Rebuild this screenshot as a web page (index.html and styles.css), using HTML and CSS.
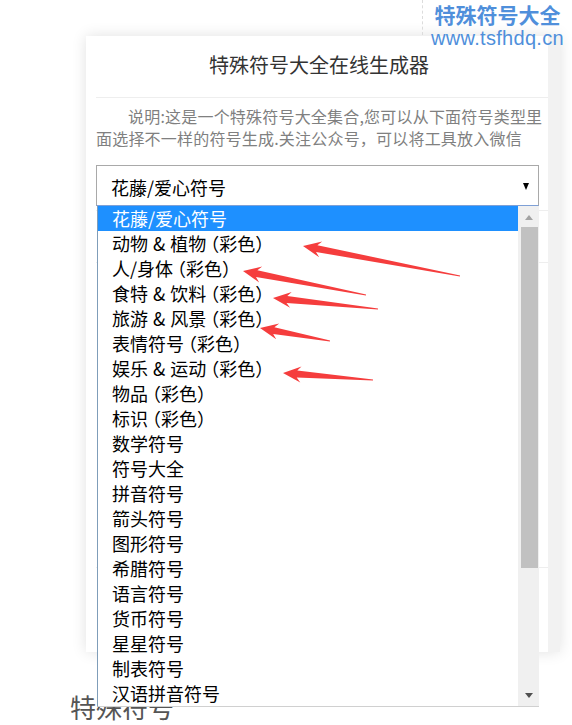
FILE: index.html
```html
<!doctype html>
<html lang="zh-CN">
<head>
    <meta charset="utf-8">
    <title>特殊符号大全在线生成器</title>
    <link rel="stylesheet" href="styles.css">
</head>
<body class="page">

<header class="topbar">
    <div class="brand">
        <div class="brand-name">特殊符号大全</div>
        <div class="brand-url">www.tsfhdq.cn</div>
    </div>
</header>

<section class="card">
    <div class="card-main">
        <h1 class="card-title">特殊符号大全在线生成器</h1>
        <div class="card-rule"></div>
        <p class="card-desc">说明:这是一个特殊符号大全集合,您可以从下面符号类型里面选择不一样的符号生成.关注公众号，可以将工具放入微信</p>

        <div class="picker">
            <div class="picker-box">
                <span class="picker-value">花藤/爱心符号</span>
                <span class="picker-caret"></span>
            </div>

            <!-- opened dropdown -->
            <div class="picker-list">
                <ul class="picker-options">
                    <li class="picker-option is-selected">花藤/爱心符号</li>
                    <li class="picker-option">动物 &amp; 植物<span class="paren">（彩色）</span></li>
                    <li class="picker-option">人/身体<span class="paren">（彩色）</span></li>
                    <li class="picker-option">食特 &amp; 饮料<span class="paren">（彩色）</span></li>
                    <li class="picker-option">旅游 &amp; 风景<span class="paren">（彩色）</span></li>
                    <li class="picker-option">表情符号<span class="paren">（彩色）</span></li>
                    <li class="picker-option">娱乐 &amp; 运动<span class="paren">（彩色）</span></li>
                    <li class="picker-option">物品<span class="paren">（彩色）</span></li>
                    <li class="picker-option">标识<span class="paren">（彩色）</span></li>
                    <li class="picker-option">数学符号</li>
                    <li class="picker-option">符号大全</li>
                    <li class="picker-option">拼音符号</li>
                    <li class="picker-option">箭头符号</li>
                    <li class="picker-option">图形符号</li>
                    <li class="picker-option">希腊符号</li>
                    <li class="picker-option">语言符号</li>
                    <li class="picker-option">货币符号</li>
                    <li class="picker-option">星星符号</li>
                    <li class="picker-option">制表符号</li>
                    <li class="picker-option">汉语拼音符号</li>
                </ul>
                <div class="scrollbar">
                    <span class="scroll-up"></span>
                    <span class="scroll-thumb"></span>
                    <span class="scroll-down"></span>
                </div>
            </div>
        </div>

        <div class="result-box"></div>
        <div class="output-box"></div>
        <div class="actions">
            <button class="copy-button" type="button"></button>
        </div>
    </div>
    <div class="card-side"></div>
</section>

<h2 class="section-title">特殊符号</h2>

<svg class="marks" width="572" height="725" viewBox="0 0 572 725">
    <polygon points="303,246 322.2,241.5 317.4,245.2 460.1,275.5 459.9,276.5 316,252 319.2,257.3"/>
    <polygon points="243,271 262.2,266.6 257.4,270.3 366.1,294.5 365.9,295.5 256,277.1 259.2,282.4"/>
    <polygon points="273,298 291.7,291.9 287.3,296 378.05,308.5 377.95,309.5 286.5,303 290.1,307.8"/>
    <polygon points="260,328 279.2,323.4 274.4,327.2 330.1,340.5 329.9,341.5 273.2,334 276.2,339.2"/>
    <polygon points="283,373 301.5,366.4 297.3,370.6 373.04,379.5 372.96,380.5 296.7,377.6 300.3,382.4"/>
</svg>

</body>
</html>
```

FILE: styles.css
```css
.page {
    margin: 0;
    position: relative;
    background: #FFFFFF;
    font-family: "Noto Sans CJK SC", "Liberation Sans", sans-serif;
    color: #333;
}

.topbar {
    position: relative;
    z-index: 4;
    height: 36px;
    display: flex;
    justify-content: flex-end;
}

.brand {
    width: 149px;
    height: 35px;
    border-left: 1px dashed #dcdcdc;
    text-align: center;
    color: #4f8fdb;
}

.brand-name {
    padding-top: 1px;
    font-size: 21px;
    line-height: 26px;
    font-weight: bold;
}

.brand-url {
    font-family: "Liberation Sans", sans-serif;
    font-size: 20px;
    line-height: 22px;
    letter-spacing: 0.3px;
}

.card {
    margin-left: 86px;
    width: 474px;
    display: flex;
    background: #FFFFFF;
    box-shadow: 0 0 14px 0 rgba(0, 0, 0, 0.12);
}

.card-main {
    flex: 1;
    padding: 0 0 23px 10px;
}

.card-side {
    width: 12px;
    background: #f2f2f2;
}

.card-title {
    margin: 0;
    height: 61px;
    padding-right: 6px;
    font-size: 20px;
    line-height: 57px;
    font-weight: normal;
    text-align: center;
    color: #333;
}

.card-rule {
    height: 1px;
    background: #eee;
}

.card-desc {
    margin: 7px 0 0;
    font-size: 16px;
    line-height: 22px;
    text-indent: 2em;
    letter-spacing: 0.2px;
    color: #808080;
}

.picker {
    position: relative;
    z-index: 2;
    margin-top: 16px;
    width: 443px;
}

.picker-box {
    display: flex;
    align-items: center;
    justify-content: space-between;
    padding: 2px 9px 0 14px;
    box-sizing: border-box;
    height: 41px;
    border: 1px solid #a9a9a9;
    border-bottom-color: #7ea0d6;
    background: #FFFFFF;
}

.picker-value {
    font-size: 18px;
    color: #000;
}

.picker-caret {
    width: 0;
    height: 0;
    border-left: 3.5px solid transparent;
    border-right: 3.5px solid transparent;
    border-top: 7px solid #000;
}

.picker-list {
    position: absolute;
    top: 100%;
    left: 1px;
    right: 0;
    display: flex;
    height: 500px;
    background: #FFFFFF;
    border-left: 1px solid #7f9db9;
    border-bottom: 1px solid #d0d0d0;
}

.picker-options {
    flex: 1;
    margin: 0;
    padding: 0;
    list-style: none;
}

.picker-option {
    height: 25px;
    padding-left: 14px;
    font-size: 18px;
    line-height: 25px;
    word-spacing: 1px;
    color: #000;
    white-space: nowrap;
}

.picker-option .paren {
    margin: 0 3px 0 4px;
    font-feature-settings: "halt";
}

.picker-option.is-selected {
    background: #1e90ff;
    color: #FFFFFF;
}

.scrollbar {
    width: 21px;
    display: flex;
    flex-direction: column;
    align-items: center;
    background: #f0f0f0;
}

.scroll-up,
.scroll-down {
    width: 0;
    height: 0;
    border-left: 4.5px solid transparent;
    border-right: 4.5px solid transparent;
}

.scroll-up {
    margin: 9px 0 7px;
    border-bottom: 5px solid #a3a3a3;
}

.scroll-thumb {
    width: 17px;
    height: 341px;
    margin-left: 1px;
    background: #c1c1c1;
}

.scroll-down {
    margin-top: auto;
    margin-bottom: 8px;
    border-top: 5px solid #505050;
}

.result-box {
    margin-top: 4px;
    height: 51px;
    border-top: 1px solid #eee;
    border-bottom: 1px solid #eee;
}

.output-box {
    height: 304px;
    border-bottom: 1px solid #eee;
}

.actions {
    margin-top: 24px;
    padding-right: 9px;
}

.copy-button {
    display: block;
    width: 100%;
    height: 37px;
    border: 0;
    border-right: 2px solid #1e7bd0;
    background: #FFFFFF;
}

.section-title {
    margin: 40px 0 0 70px;
    font-size: 26px;
    line-height: 30px;
    font-weight: normal;
    color: #555;
}

.marks {
    position: absolute;
    top: 0;
    left: 0;
    z-index: 5;
    pointer-events: none;
    fill: #f53d3d;
}
```
